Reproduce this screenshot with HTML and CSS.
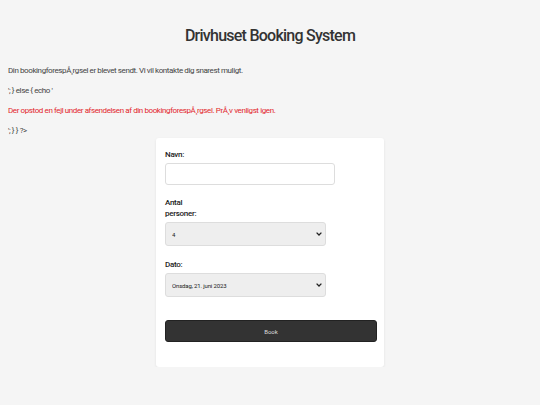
FILE: index.html
```html
<!DOCTYPE html>
<html lang="da">
<head>
<meta charset="utf-8">
<title>Drivhuset Booking System</title>
<link rel="stylesheet" href="styles.css">
</head>
<body>
<h1 class="title">Drivhuset Booking System</h1>
<p class="msg">Din bookingforespÅ¸rgsel er blevet sendt. Vi vil kontakte dig snarest muligt.</p>
<p class="msg">'; } else { echo '</p>
<p class="msg error">Der opstod en fejl under afsendelsen af din bookingforespÅ¸rgsel. PrÅ¸v venligst igen.</p>
<p class="msg">'; } } ?&gt;</p>
<form class="card">
  <label class="label" for="navn">Navn:</label>
  <input class="input" id="navn" type="text">
  <label class="label narrow" for="antal">Antal personer:</label>
  <div class="select-wrap">
    <select class="select" id="antal"><option>4</option></select>
    <svg class="chev" width="6" height="4" viewBox="0 0 6 4"><path d="M0.6 0.6 L3 3 L5.4 0.6" fill="none" stroke="#222" stroke-width="1.3"/></svg>
  </div>
  <label class="label" for="dato">Dato:</label>
  <div class="select-wrap">
    <select class="select" id="dato"><option>Onsdag, 21. juni 2023</option></select>
    <svg class="chev" width="6" height="4" viewBox="0 0 6 4"><path d="M0.6 0.6 L3 3 L5.4 0.6" fill="none" stroke="#222" stroke-width="1.3"/></svg>
  </div>
  <button class="btn" type="button">Book</button>
</form>
</body>
</html>
```
FILE: styles.css
```css
html, body { margin: 0; padding: 0; }
body {
  background: #f5f5f5;
  color: #333;
  font-family: "Roboto", "Liberation Sans", sans-serif;
  padding: 0 8px;
}
.title {
  margin: 0;
  padding-top: 26px;
  height: 24px;
  text-align: center;
  font-size: 16px;
  letter-spacing: -0.75px;
  font-weight: 500;
  color: #333;
  line-height: 20px;
}
.msg {
  margin: 0;
  font-size: 8px;
  letter-spacing: -0.4px;
  line-height: 10px;
  color: #444;
  margin-top: 10px;
}
.title + .msg { margin-top: 16px; }
.error { color: #e3262b; }
.card {
  width: 210px;
  margin: 2px auto 0;
  background: #fff;
  border-radius: 3px;
  box-shadow: 0 1px 3px rgba(0,0,0,0.08);
  padding: 11px 9px 25px;
  display: flex;
  flex-direction: column;
  align-items: flex-start;
}
.label {
  display: block;
  font-size: 8px;
  letter-spacing: -0.3px;
  font-weight: 500;
  line-height: 11px;
  color: #222;
  margin-bottom: 3px;
}
.narrow { width: 40px; }
.input {
  box-sizing: border-box;
  width: 170px;
  height: 22px;
  border: 1px solid #ddd;
  border-radius: 3px;
  margin: 0 0 12px;
  padding: 0 6px;
}
.select-wrap {
  position: relative;
  width: 161px;
  margin: 0 0 13px;
}
.select {
  display: block;
  box-sizing: border-box;
  width: 161px;
  height: 24px;
  border: 1px solid #ddd;
  border-radius: 3px;
  background-color: #eee;
  -webkit-appearance: none;
  appearance: none;
  font-family: "Roboto", "Liberation Sans", sans-serif;
  font-size: 6px;
  letter-spacing: -0.15px;
  color: #222;
  padding: 0 6px;
  margin: 0;
}
.chev {
  position: absolute;
  right: 4px;
  top: 10px;
  pointer-events: none;
}
.btn {
  margin-top: 10px;
  width: 212px;
  height: 22px;
  background: #333;
  color: #ddd;
  border: 1px solid #222;
  border-radius: 3px;
  font-family: "Roboto", "Liberation Sans", sans-serif;
  font-size: 6px;
}
```
